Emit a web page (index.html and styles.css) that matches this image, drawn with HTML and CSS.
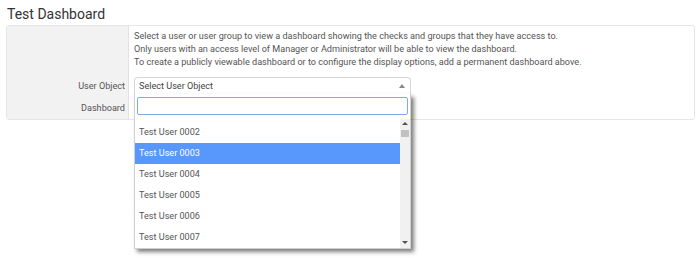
FILE: index.html
```html
<!DOCTYPE html>
<html lang="en">
<head>
    <meta charset="UTF-8">
    <meta name="viewport" content="width=device-width, initial-scale=1.0">
    <title>Test Dashboard</title>
    <link rel="stylesheet" href="styles.css">
</head>
<body>

    <h1 class="page-title">Test Dashboard</h1>

    <div class="panel">
        <div class="cell-label"></div>
        <div class="cell-value intro">
            Select a user or user group to view a dashboard showing the checks and groups that they have access to.<br>
            Only users with an access level of Manager or Administrator will be able to view the dashboard.<br>
            To create a publicly viewable dashboard or to configure the display options, add a permanent dashboard above.
        </div>

        <div class="cell-label">User Object</div>
        <div class="cell-value">
            <div class="select-wrap">
                <div class="select-box open">
                    <span>Select User Object</span>
                    <span class="arrow-up"></span>
                </div>

                <!-- Dropdown -->
                <div class="dropdown">
                    <div class="search-row">
                        <input type="text" class="search-input">
                    </div>
                    <div class="results">
                        <ul class="result-list">
                            <li>Test User 0002</li>
                            <li class="active">Test User 0003</li>
                            <li>Test User 0004</li>
                            <li>Test User 0005</li>
                            <li>Test User 0006</li>
                            <li>Test User 0007</li>
                        </ul>
                        <div class="scrollbar">
                            <span class="sb-up"></span>
                            <span class="sb-thumb"></span>
                            <span class="sb-down"></span>
                        </div>
                    </div>
                </div>
            </div>
        </div>

        <div class="cell-label">Dashboard</div>
        <div class="cell-value">
            <div class="select-box"></div>
        </div>
    </div>

</body>
</html>
```

FILE: styles.css
```css
html, body {
    min-height: 100vh;
}

body {
    font-family: Roboto, "Liberation Sans", Arial, sans-serif;
    margin: 0;
    padding: 0;
    background-color: #fff;
    color: #555;
    font-size: 9.1px;
}

.page-title {
    font-size: 14px;
    font-weight: 400;
    color: #333;
    margin: 0;
    padding: 4px 0 0 7px;
    line-height: 21px;
}

/* Panel */
.panel {
    display: grid;
    grid-template-columns: 122px 1fr;
    margin: 0 5px 0 6px;
    border: 1px solid #e6e6e6;
    border-radius: 3px;
}

.cell-label {
    background-color: #f2f2f2;
    border-right: 1px solid #e2e2e2;
    text-align: right;
    padding-right: 3px;
    display: flex;
    align-items: center;
    justify-content: flex-end;
    color: #555;
}

.cell-value {
    padding: 2px 5px;
}

.intro {
    padding: 4px 5px 6px;
    line-height: 13px;
}

/* Select */
.select-wrap {
    position: relative;
    width: 277px;
}

.select-box {
    height: 16px;
    width: 275px;
    border: 1px solid #d6d6d6;
    border-radius: 4px;
    background-color: #fff;
    display: flex;
    align-items: center;
    justify-content: space-between;
    line-height: 16px;
}

.select-box span:first-child {
    padding-left: 4px;
    color: #444;
}

.select-box.open {
    border-bottom-color: #eee;
    border-radius: 4px 4px 0 0;
}

.arrow-up {
    width: 0;
    height: 0;
    border-left: 3px solid transparent;
    border-right: 3px solid transparent;
    border-bottom: 4px solid #888;
    margin-right: 5px;
}

/* Dropdown */
.dropdown {
    position: absolute;
    z-index: 10;
    left: 0;
    top: 17px;
    width: 275px;
    background-color: #fff;
    border: 1px solid #d0d0d0;
    border-top: none;
    box-shadow: 3px 3px 4px rgba(0, 0, 0, 0.5);
}

.search-row {
    padding: 3px 2px 0;
}

.search-input {
    display: block;
    width: 100%;
    height: 18px;
    box-sizing: border-box;
    border: 1px solid #7ea9ef;
    border-radius: 2px;
    margin: 0;
    padding: 0 4px;
    outline: none;
}

.results {
    display: flex;
    margin-top: 4px;
    height: 129px;
    overflow: hidden;
}

.result-list {
    list-style: none;
    margin: 0;
    padding: 3px 0 0;
    flex: 1;
}

.result-list li {
    height: 21px;
    line-height: 21px;
    padding-left: 4px;
    color: #555;
}

.result-list li.active {
    background-color: #5897fb;
    color: #fff;
}

.scrollbar {
    width: 10px;
    background-color: #f1f1f1;
    position: relative;
}

.sb-up,
.sb-down {
    position: absolute;
    left: 2px;
    width: 0;
    height: 0;
    border-left: 3px solid transparent;
    border-right: 3px solid transparent;
}

.sb-up {
    top: 3px;
    border-bottom: 3px solid #505050;
}

.sb-down {
    bottom: 4px;
    border-top: 3px solid #505050;
}

.sb-thumb {
    position: absolute;
    left: 1px;
    top: 11px;
    width: 8px;
    height: 7px;
    background-color: #c1c1c1;
}
```
